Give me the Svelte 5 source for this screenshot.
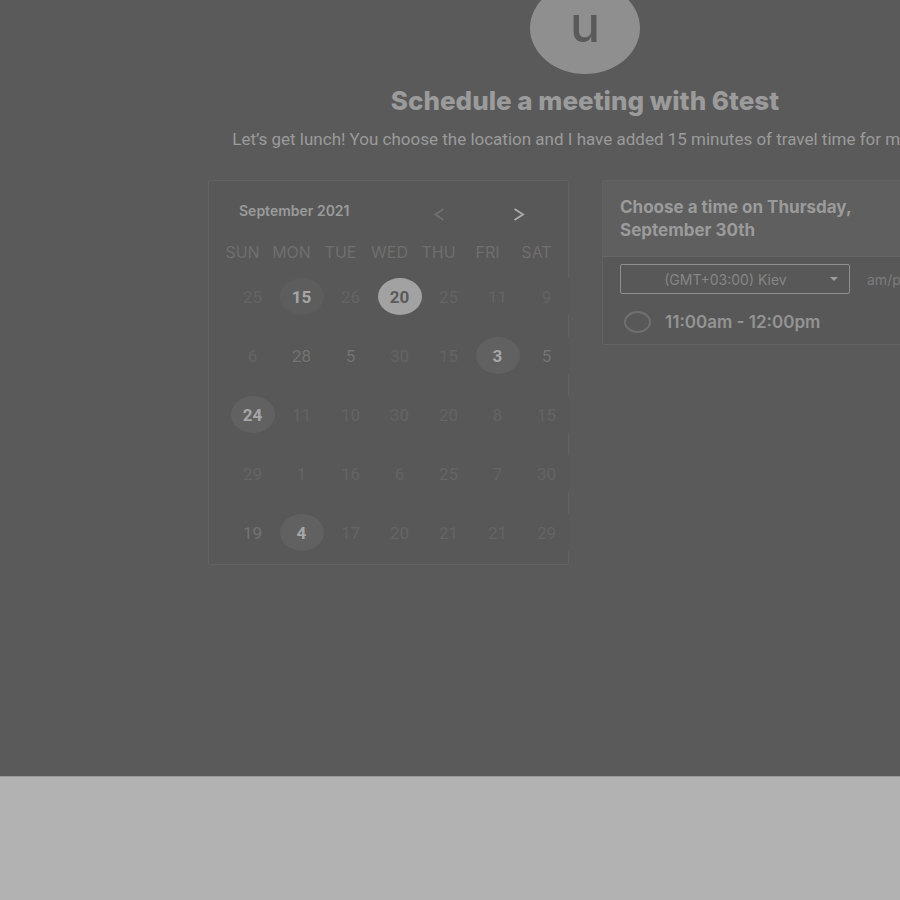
<script>
  const weekdays = ['SUN', 'MON', 'TUE', 'WED', 'THU', 'FRI', 'SAT'];
  // Each day is [label, state]; an empty state is a day that cannot be booked.
  const weeks = [
    [['25', ''], ['15', 'open rough'], ['26', ''], ['20', 'selected'], ['25', ''], ['11', ''], ['9', '']],
    [['6', ''], ['28', 'plain'], ['5', 'plain'], ['30', ''], ['15', ''], ['3', 'open'], ['5', 'plain']],
    [['24', 'open'], ['11', ''], ['10', ''], ['30', ''], ['20', ''], ['8', ''], ['15', '']],
    [['29', ''], ['1', ''], ['16', ''], ['6', ''], ['25', ''], ['7', ''], ['30', '']],
    [['19', 'plain'], ['4', 'open'], ['17', ''], ['20', ''], ['21', ''], ['21', ''], ['29', '']]
  ];
</script>

<div class="page">
  <main>
    <header class="intro">
      <div class="avatar">u</div>
      <h1>Schedule a meeting with 6test</h1>
      <p>Let’s get lunch! You choose the location and I have added 15 minutes of travel time for me.</p>
    </header>

    <div class="panels">
      <section class="card calendar" aria-label="Calendar">
        <div class="month">
          <h2>September 2021</h2>
          <div class="nav">
            <button class="prev" aria-label="Previous month">
              <svg width="12" height="14" viewBox="0 0 12 14"><path d="M10.500 2 2.500 7.500l8 5.500" /></svg>
            </button>
            <button class="next" aria-label="Next month">
              <svg width="12" height="14" viewBox="0 0 12 14"><path d="M1.500 2 10 7.500l-8.500 5.500" /></svg>
            </button>
          </div>
        </div>
        <table>
          <thead>
            <tr>
              {#each weekdays as name}<th scope="col"><span>{name}</span></th>{/each}
            </tr>
          </thead>
          <tbody>
            {#each weeks as week}
              <tr>
                {#each week as [label, state]}
                  <td><button class="day {state}">{label}</button></td>
                {/each}
              </tr>
            {/each}
          </tbody>
        </table>
      </section>

      <section class="card times" aria-label="Available times">
        <h2>Choose a time on Thursday, September 30th</h2>
        <div class="zone">
          <div class="picker">
            <select aria-label="Time zone">
              <option>(GMT+03:00) Kiev</option>
            </select>
            <svg width="8" height="4" viewBox="0 0 8 4"><path d="M0 0h8L4 4z" /></svg>
          </div>
          <span>am/pm</span>
        </div>
        <label class="slot">
          <input type="radio" name="slot" />
          <span>11:00am - 12:00pm</span>
        </label>
      </section>
    </div>
  </main>
  <footer></footer>
</div>

<style>
  :global(body) {
    margin: 0;
    background: #b2b2b2;
  }

  .page {
    min-height: 100vh;
    display: flex;
    flex-direction: column;
    overflow: hidden;
    background: #5a5a5a;
    color: #9b9b9b;
    font-family: Inter, Roboto, sans-serif;
  }

  main {
    flex: 1;
    padding-left: 208px;
  }

  .intro {
    width: 754px;
    display: flex;
    flex-direction: column;
    align-items: center;
  }

  .avatar {
    width: 110px;
    height: 92px;
    margin-top: -18px;
    border-radius: 50%;
    background: #8f8f8f;
    color: #5a5a5a;
    font-size: 50px;
    font-weight: 500;
    line-height: 84px;
    text-align: center;
  }

  h1, h2, p {
    margin: 0;
  }

  h1 {
    margin-top: 11px;
    font-size: 26px;
    font-weight: 800;
    line-height: 32px;
    white-space: nowrap;
  }

  p {
    margin-top: 10px;
    padding-right: 24px;
    font-family: Roboto, sans-serif;
    font-size: 17px;
    line-height: 24px;
    white-space: nowrap;
  }

  .panels {
    display: flex;
    align-items: flex-start;
    gap: 33px;
    margin-top: 29px;
  }

  .card {
    box-sizing: border-box;
    flex: none;
    width: 361px;
    border: 1px solid #626262;
    border-radius: 2px;
    background: #585858;
  }

  button {
    padding: 0;
    border: 0;
    background: none;
    color: inherit;
    font-family: inherit;
  }

  .calendar {
    padding: 14px 0 2px 19px;
  }

  .month {
    display: flex;
    align-items: flex-start;
    justify-content: space-between;
    height: 42px;
    padding: 0 41px 0 11px;
  }

  .month h2 {
    font-size: 14px;
    font-weight: 600;
    line-height: 32px;
  }

  .nav {
    display: flex;
    gap: 64px;
  }

  .nav button {
    display: flex;
    padding: 12px 2px;
  }

  .nav path {
    fill: none;
    stroke: currentColor;
    stroke-width: 2;
  }

  .prev {
    color: #6f6f6f;
  }

  .next {
    color: #a8a8a8;
  }

  table {
    width: 343px;
    table-layout: fixed;
    border-collapse: collapse;
  }

  th, td {
    padding: 0;
    text-align: center;
  }

  th {
    height: 30px;
    color: #6f6f6f;
    font-size: 16px;
    font-weight: 400;
  }

  /* The weekday names sit left of the day columns. */
  th span {
    display: block;
    margin: 0 10px 0 -10px;
  }

  td {
    height: 59px;
  }

  .day {
    display: block;
    width: 44px;
    height: 37px;
    margin: 0 auto;
    background: #585858;
    color: #646464;
    font-family: Roboto, sans-serif;
    font-size: 17px;
  }

  .plain {
    color: #737373;
  }

  .open {
    border-radius: 50%;
    background: #616161;
    color: #a6a6a6;
    font-weight: 700;
  }

  .rough {
    background: #5d5d5d;
  }

  .selected {
    border-radius: 50%;
    background: #a2a2a2;
    color: #5a5a5a;
    font-weight: 700;
  }

  .times h2 {
    padding: 15px 60px 14px 17px;
    border-bottom: 1px solid #666666;
    background: #5f5f5f;
    font-size: 17px;
    font-weight: 700;
    line-height: 23px;
  }

  .zone {
    display: flex;
    align-items: center;
    gap: 17px;
    padding: 7px 17px 0;
    color: #7c7c7c;
    font-size: 14px;
  }

  .picker {
    position: relative;
  }

  select {
    box-sizing: border-box;
    display: block;
    width: 230px;
    height: 30px;
    padding: 0 19px 0 0;
    border: 1px solid #8f8f8f;
    border-radius: 2px;
    appearance: none;
    background: #585858;
    color: #868686;
    font: inherit;
    text-align: center;
    text-align-last: center;
  }

  .picker svg {
    position: absolute;
    top: 13px;
    right: 12px;
    fill: #9b9b9b;
    pointer-events: none;
  }

  .slot {
    display: flex;
    align-items: center;
    gap: 14px;
    padding: 17px 21px 11px;
    color: #949494;
    font-size: 17px;
    font-weight: 600;
    line-height: 22px;
  }

  .slot input {
    box-sizing: border-box;
    width: 27px;
    height: 22px;
    margin: 0;
    border: 2px solid #6f6f6f;
    border-radius: 50%;
    appearance: none;
  }

  footer {
    height: 123px;
    border-top: 1px solid #999999;
    background: #b2b2b2;
  }
</style>
